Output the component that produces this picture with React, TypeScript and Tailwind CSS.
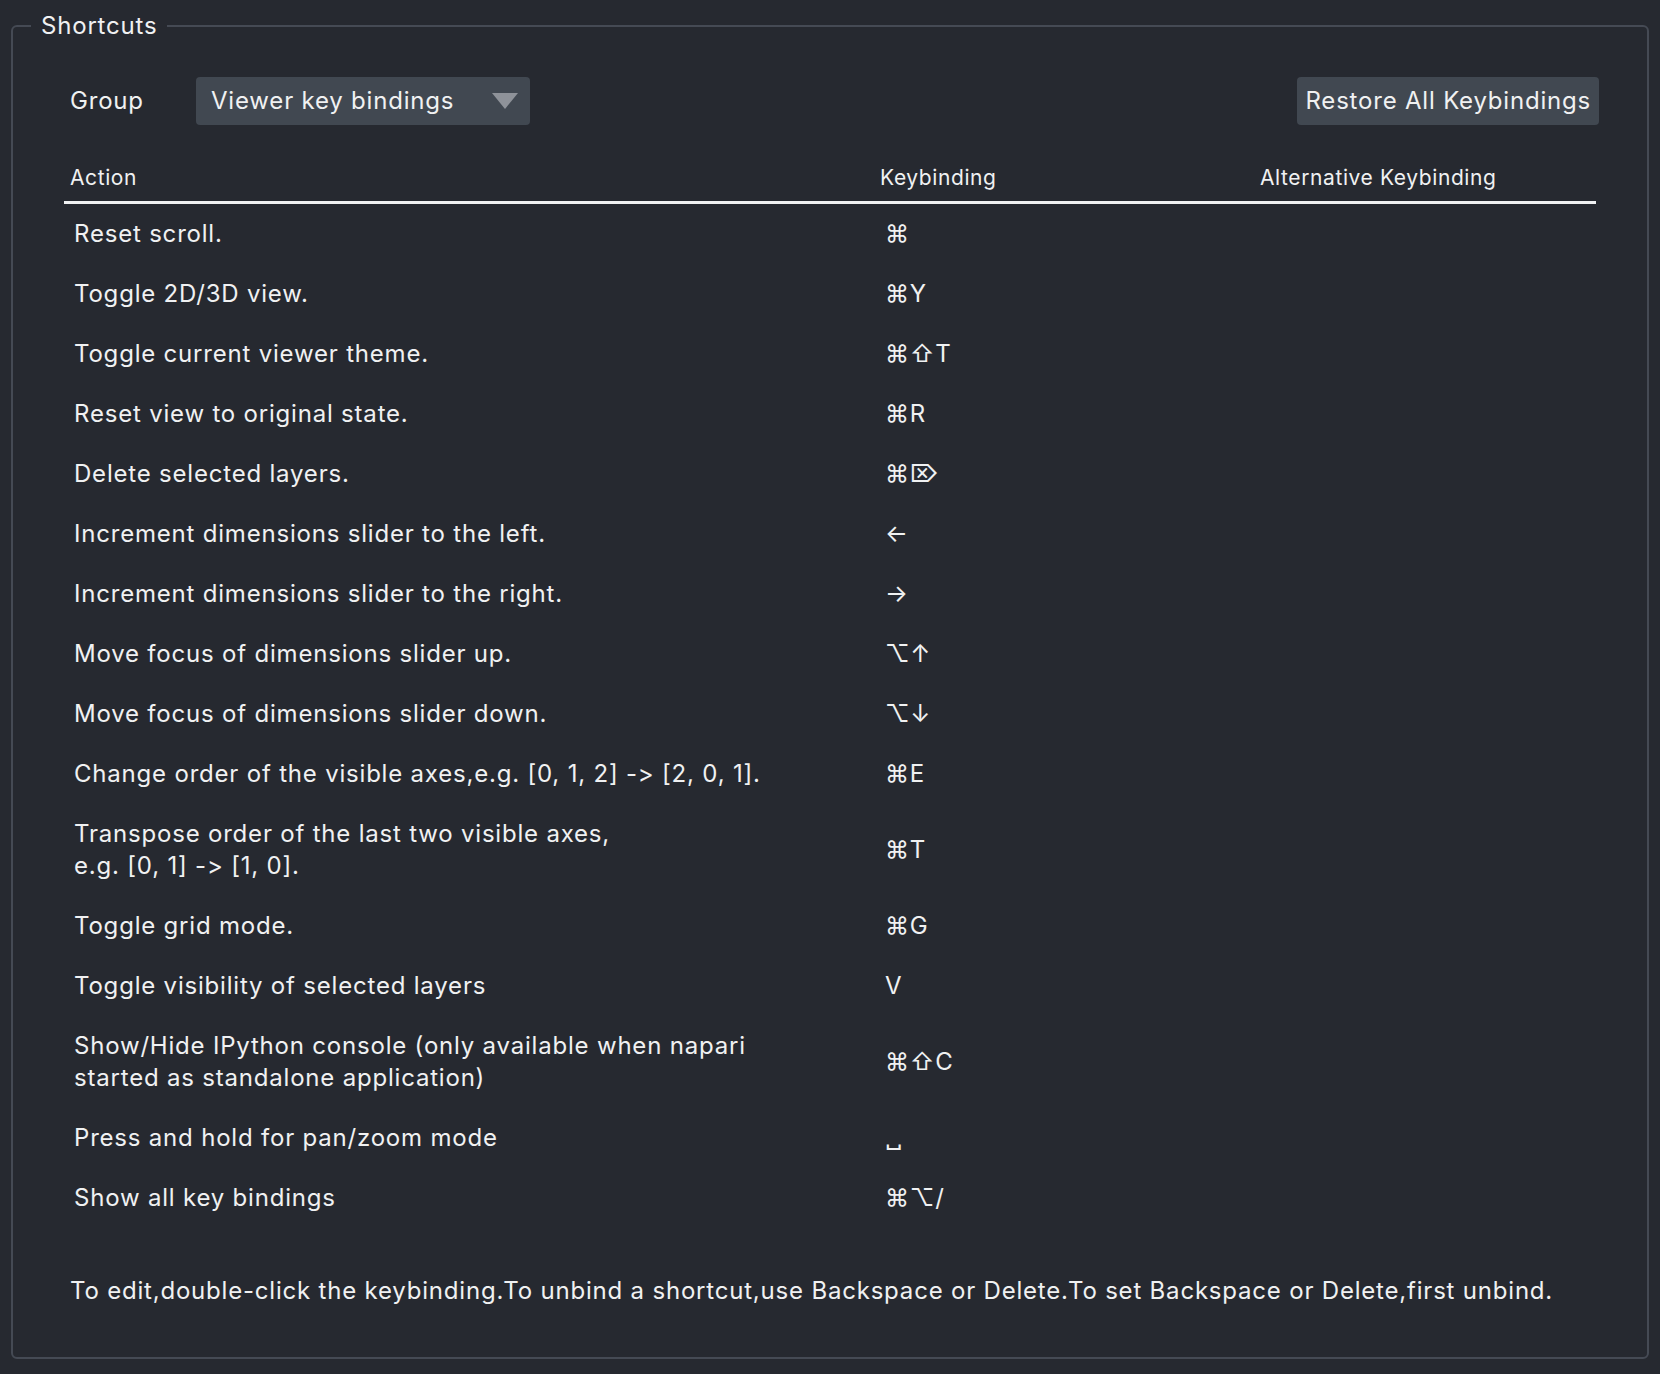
const rows: { action: string[]; key: string }[] = [
  { action: ["Reset scroll."], key: "⌘" },
  { action: ["Toggle 2D/3D view."], key: "⌘Y" },
  { action: ["Toggle current viewer theme."], key: "⌘⇧T" },
  { action: ["Reset view to original state."], key: "⌘R" },
  { action: ["Delete selected layers."], key: "⌘⌦" },
  { action: ["Increment dimensions slider to the left."], key: "←" },
  { action: ["Increment dimensions slider to the right."], key: "→" },
  { action: ["Move focus of dimensions slider up."], key: "⌥↑" },
  { action: ["Move focus of dimensions slider down."], key: "⌥↓" },
  {
    action: ["Change order of the visible axes,e.g. [0, 1, 2] -> [2, 0, 1]."],
    key: "⌘E",
  },
  {
    action: [
      "Transpose order of the last two visible axes,",
      "e.g. [0, 1] -> [1, 0].",
    ],
    key: "⌘T",
  },
  { action: ["Toggle grid mode."], key: "⌘G" },
  { action: ["Toggle visibility of selected layers"], key: "V" },
  {
    action: [
      "Show/Hide IPython console (only available when napari",
      "started as standalone application)",
    ],
    key: "⌘⇧C",
  },
  { action: ["Press and hold for pan/zoom mode"], key: "␣" },
  { action: ["Show all key bindings"], key: "⌘⌥/" },
];

export default function App() {
  return (
    <div className="h-[1374px] w-[1660px] bg-[#262930] pl-[11px] pt-[10px] font-['Inter','DejaVu_Sans',sans-serif] tracking-[0.8px] text-[#f0f1f2] [font-variant-ligatures:none] [font-feature-settings:'calt'_0,'liga'_0]">
      <fieldset className="h-[1349px] w-[1638px] rounded-[6px] border-[2px] border-[#454a54]">
        <legend className="ml-[18px] px-[10px] text-[24px] leading-[32px]">
          Shortcuts
        </legend>

        <div className="px-[51px] pt-[35px]">
          <div className="flex h-[48px] items-center pl-[6px]">
            <span className="w-[126px] text-[24px]">Group</span>
            <button
              className="flex h-[48px] w-[334px] items-center justify-between rounded-[4px] bg-[#414851] pl-[15px] pr-[12px] text-[24px]"
              type="button"
            >
              <span>Viewer key bindings</span>
              <svg width="26" height="16" viewBox="0 0 26 16">
                <polygon points="0,0 26,0 13,16" fill="#8e9299" />
              </svg>
            </button>
            <div className="flex-1" />
            <button
              className="-mr-[3px] h-[48px] rounded-[4px] bg-[#414851] px-[8px] text-[24px]"
              type="button"
            >
              Restore All Keybindings
            </button>
          </div>

          <div className="mt-[39px] grid grid-cols-[811px_380px_1fr] border-b-[3px] border-[#f0f1f2] pb-[9px] text-[21px] leading-[28px] tracking-[0.6px]">
            <div className="pl-[6px]">Action</div>
            <div className="pl-[5px]">Keybinding</div>
            <div className="pl-[5px]">Alternative Keybinding</div>
          </div>

          <div className="text-[24px] leading-[32px]">
            {rows.map((row) => (
              <div
                className="grid grid-cols-[811px_380px_1fr] items-center py-[14px]"
                key={row.action[0]}
              >
                <div className="pl-[10px]">
                  {row.action.map((line) => (
                    <div key={line}>{line}</div>
                  ))}
                </div>
                <div className="pl-[10px]">{row.key}</div>
                <div />
              </div>
            ))}
          </div>

          <p className="mt-[47px] pl-[6px] text-[24px] leading-[32px]">
            To edit,double-click the keybinding.To unbind a shortcut,use
            Backspace or Delete.To set Backspace or Delete,first unbind.
          </p>
        </div>
      </fieldset>
    </div>
  );
}
